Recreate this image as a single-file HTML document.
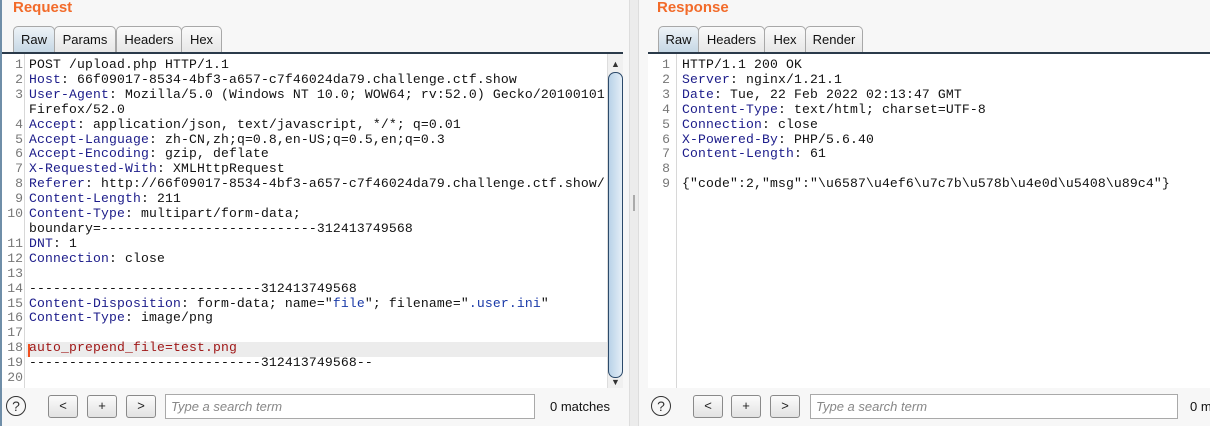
<!DOCTYPE html>
<html><head><meta charset="utf-8"><style>
*{margin:0;padding:0;box-sizing:border-box}
body{width:1210px;height:426px;overflow:hidden;background:#f7f7f7;font-family:"Liberation Sans",sans-serif;position:relative}
.abs{position:absolute}
.title{color:#f26b2a;font-weight:bold;font-size:15px;top:-1px}
.tab{position:absolute;top:26px;height:27px;border:1px solid #a8a8a8;border-bottom:none;border-radius:5px 5px 0 0;background:linear-gradient(#fafafa,#e6e6e6);font-size:13px;line-height:25px;text-align:center;color:#111}
.tab.sel{background:linear-gradient(#eef3f7,#c4d6e4);}
.tabline{position:absolute;top:52px;height:2px;background:#2a3a4a}
.ed{position:absolute;top:54px;background:#fff;overflow:hidden}
.gut{position:absolute;top:0;bottom:0;border-right:1px solid #d8d8d8;background:#fff}
.code{position:absolute;top:4px;font-family:"Liberation Mono",monospace;font-size:13.1px;letter-spacing:0.14px;line-height:14.9px;white-space:pre;color:#111}
.nums{position:absolute;top:4px;font-family:"Liberation Mono",monospace;font-size:13.1px;line-height:14.9px;white-space:pre;color:#777;text-align:right}
.k{color:#1c1c8a}.s{color:#1a3aa8}.r{color:#a01818}
.btn{position:absolute;top:395px;width:30px;height:23px;border:1px solid #8a8a8a;border-radius:3px;background:linear-gradient(#fbfbfb,#e2e2e2);font-size:13px;text-align:center;line-height:20px;color:#222}
.inp{position:absolute;top:394px;height:25px;border:1px solid #a9a9a9;background:#fff;font-size:13px;font-style:italic;color:#888;padding-left:5px;line-height:23px}
.q{position:absolute;top:396px;width:20px;height:20px;border:1.3px solid #333;border-radius:50%;font-size:14px;text-align:center;line-height:18px;color:#333}
</style></head><body>
<div class="abs" style="left:0;top:0;width:2px;height:426px;background:#6f8ea8"></div>
<div class="abs title" style="left:13px">Request</div>
<div class="tab sel" style="left:13px;width:42px">Raw</div>
<div class="tab" style="left:54px;width:62px">Params</div>
<div class="tab" style="left:116px;width:66px">Headers</div>
<div class="tab" style="left:181px;width:41px">Hex</div>
<div class="tabline" style="left:2px;width:621px"></div>
<div class="ed" style="left:2px;width:621px;height:334px">
<div class="gut" style="left:0;width:23px"></div>
<div class="abs" style="left:24px;top:288px;width:582px;height:15px;background:#ececec"></div>
<div class="abs" style="left:26px;top:290px;width:2px;height:13px;background:#f05020"></div>
<div class="nums" style="left:0;width:21px">1
2
3

4
5
6
7
8
9
10

11
12
13
14
15
16
17
18
19
20</div>
<div class="code" style="left:27px">POST /upload.php HTTP/1.1
<span class="k">Host</span>: 66f09017-8534-4bf3-a657-c7f46024da79.challenge.ctf.show
<span class="k">User-Agent</span>: Mozilla/5.0 (Windows NT 10.0; WOW64; rv:52.0) Gecko/20100101
Firefox/52.0
<span class="k">Accept</span>: application/json, text/javascript, */*; q=0.01
<span class="k">Accept-Language</span>: zh-CN,zh;q=0.8,en-US;q=0.5,en;q=0.3
<span class="k">Accept-Encoding</span>: gzip, deflate
<span class="k">X-Requested-With</span>: XMLHttpRequest
<span class="k">Referer</span>: http://66f09017-8534-4bf3-a657-c7f46024da79.challenge.ctf.show/
<span class="k">Content-Length</span>: 211
<span class="k">Content-Type</span>: multipart/form-data;
boundary=---------------------------312413749568
<span class="k">DNT</span>: 1
<span class="k">Connection</span>: close

-----------------------------312413749568
<span class="k">Content-Disposition</span>: form-data; name="<span class="s">file</span>"; filename="<span class="s">.user.ini</span>"
<span class="k">Content-Type</span>: image/png

<span class="r">auto_prepend_file=test.png</span>
-----------------------------312413749568--
</div>
<div class="abs" style="left:605px;top:0;width:16px;height:334px;background:#f0f0f0;border-left:1px solid #ddd"></div>
<div class="abs" style="left:609px;top:5px;font-size:9px;color:#333">▲</div>
<div class="abs" style="left:606px;top:18px;width:15px;height:306px;border:1.5px solid #2c4a6a;border-radius:7px;background:linear-gradient(90deg,#b9d2e8,#e4eef7)"></div>
<div class="abs" style="left:609px;top:323px;font-size:9px;color:#333">▼</div>
</div>
<div class="abs" style="left:629px;top:0;width:10px;height:426px;background:#ececec;border-left:1px solid #ddd;border-right:1px solid #ddd"></div>
<div class="abs" style="left:633px;top:195px;width:2px;height:16px;background:#aaa"></div>

<div class="q" style="left:6px">?</div>
<div class="btn" style="left:48px">&lt;</div>
<div class="btn" style="left:87px">+</div>
<div class="btn" style="left:126px">&gt;</div>
<div class="inp" style="left:165px;width:370px">Type a search term</div>
<div class="abs" style="left:550px;top:399px;font-size:13px;color:#111">0 matches</div>

<div class="abs title" style="left:657px">Response</div>
<div class="tab sel" style="left:658px;width:41px">Raw</div>
<div class="tab" style="left:698px;width:67px">Headers</div>
<div class="tab" style="left:764px;width:42px">Hex</div>
<div class="tab" style="left:805px;width:58px">Render</div>
<div class="tabline" style="left:648px;width:562px"></div>
<div class="ed" style="left:648px;width:562px;height:334px">
<div class="gut" style="left:0;width:29px"></div>
<div class="nums" style="left:0;width:22px">1
2
3
4
5
6
7
8
9</div>
<div class="code" style="left:34px">HTTP/1.1 200 OK
<span class="k">Server</span>: nginx/1.21.1
<span class="k">Date</span>: Tue, 22 Feb 2022 02:13:47 GMT
<span class="k">Content-Type</span>: text/html; charset=UTF-8
<span class="k">Connection</span>: close
<span class="k">X-Powered-By</span>: PHP/5.6.40
<span class="k">Content-Length</span>: 61

{"code":2,"msg":"\u6587\u4ef6\u7c7b\u578b\u4e0d\u5408\u89c4"}</div>
</div>
<div class="q" style="left:651px">?</div>
<div class="btn" style="left:693px">&lt;</div>
<div class="btn" style="left:731px">+</div>
<div class="btn" style="left:770px">&gt;</div>
<div class="inp" style="left:810px;width:368px">Type a search term</div>
<div class="abs" style="left:1190px;top:399px;font-size:13px;color:#111;white-space:nowrap">0 matches</div>
</body></html>
